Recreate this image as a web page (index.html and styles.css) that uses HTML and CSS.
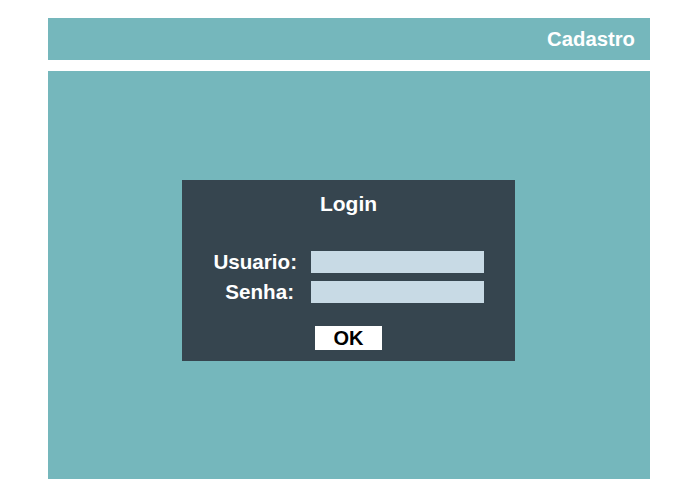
FILE: index.html
```html
<!DOCTYPE html>
<html lang="pt">
<head>
<meta charset="utf-8">
<title>Cadastro</title>
<link rel="stylesheet" href="styles.css">
</head>
<body>
<div class="page">
  <header class="topbar">
    <span class="topbar-title">Cadastro</span>
  </header>
  <main class="content">
    <form class="login">
      <div class="login-title">Login</div>
      <div class="fields">
        <label class="field-label" for="u">Usuario:</label>
        <input class="field-input" id="u" type="text">
        <label class="field-label field-label--senha" for="s">Senha:</label>
        <input class="field-input" id="s" type="password">
      </div>
      <div class="actions">
        <button class="ok-btn" type="button">OK</button>
      </div>
    </form>
  </main>
</div>
</body>
</html>
```
FILE: styles.css
```css
html, body {
  margin: 0;
  padding: 0;
  background: #ffffff;
  font-family: "Liberation Sans", Arial, sans-serif;
}

.page {
  width: 602px;
  margin-left: 48px;
  padding-top: 18px;
  display: flex;
  flex-direction: column;
  gap: 11px;
}

.topbar {
  height: 42px;
  background: #75b7bc;
  display: flex;
  align-items: center;
  justify-content: flex-end;
  padding-right: 15px;
}

.topbar-title {
  color: #ffffff;
  font-weight: bold;
  font-size: 20.3px;
  line-height: 24px;
}

.content {
  height: 408px;
  background: #75b7bc;
  display: flex;
  justify-content: flex-start;
  align-items: flex-start;
  padding-top: 109px;
  padding-left: 134px;
  box-sizing: border-box;
}

.login {
  width: 333px;
  height: 181px;
  box-sizing: border-box;
  background: #36454f;
  padding-top: 12px;
  display: flex;
  flex-direction: column;
  align-items: center;
}

.login-title {
  color: #ffffff;
  font-weight: bold;
  font-size: 21px;
  line-height: 24px;
}

.fields {
  margin-top: 35px;
  display: grid;
  grid-template-columns: 115px 173px;
  column-gap: 14px;
  row-gap: 8px;
  align-self: flex-start;
}

.field-label {
  color: #ffffff;
  font-weight: bold;
  font-size: 20.6px;
  line-height: 22px;
  text-align: right;
}

.field-label--senha {
  padding-right: 3px;
}

.field-input {
  width: 173px;
  height: 22px;
  box-sizing: border-box;
  border: none;
  margin: 0;
  padding: 0;
  background: #c8dae5;
}

.actions {
  margin-top: 23px;
  display: flex;
  justify-content: center;
}

.ok-btn {
  width: 67px;
  height: 24px;
  border: none;
  margin: 0;
  padding: 0;
  background: #ffffff;
  color: #000000;
  font-family: "Liberation Sans", Arial, sans-serif;
  font-weight: bold;
  font-size: 20px;
  line-height: 24px;
}
```
